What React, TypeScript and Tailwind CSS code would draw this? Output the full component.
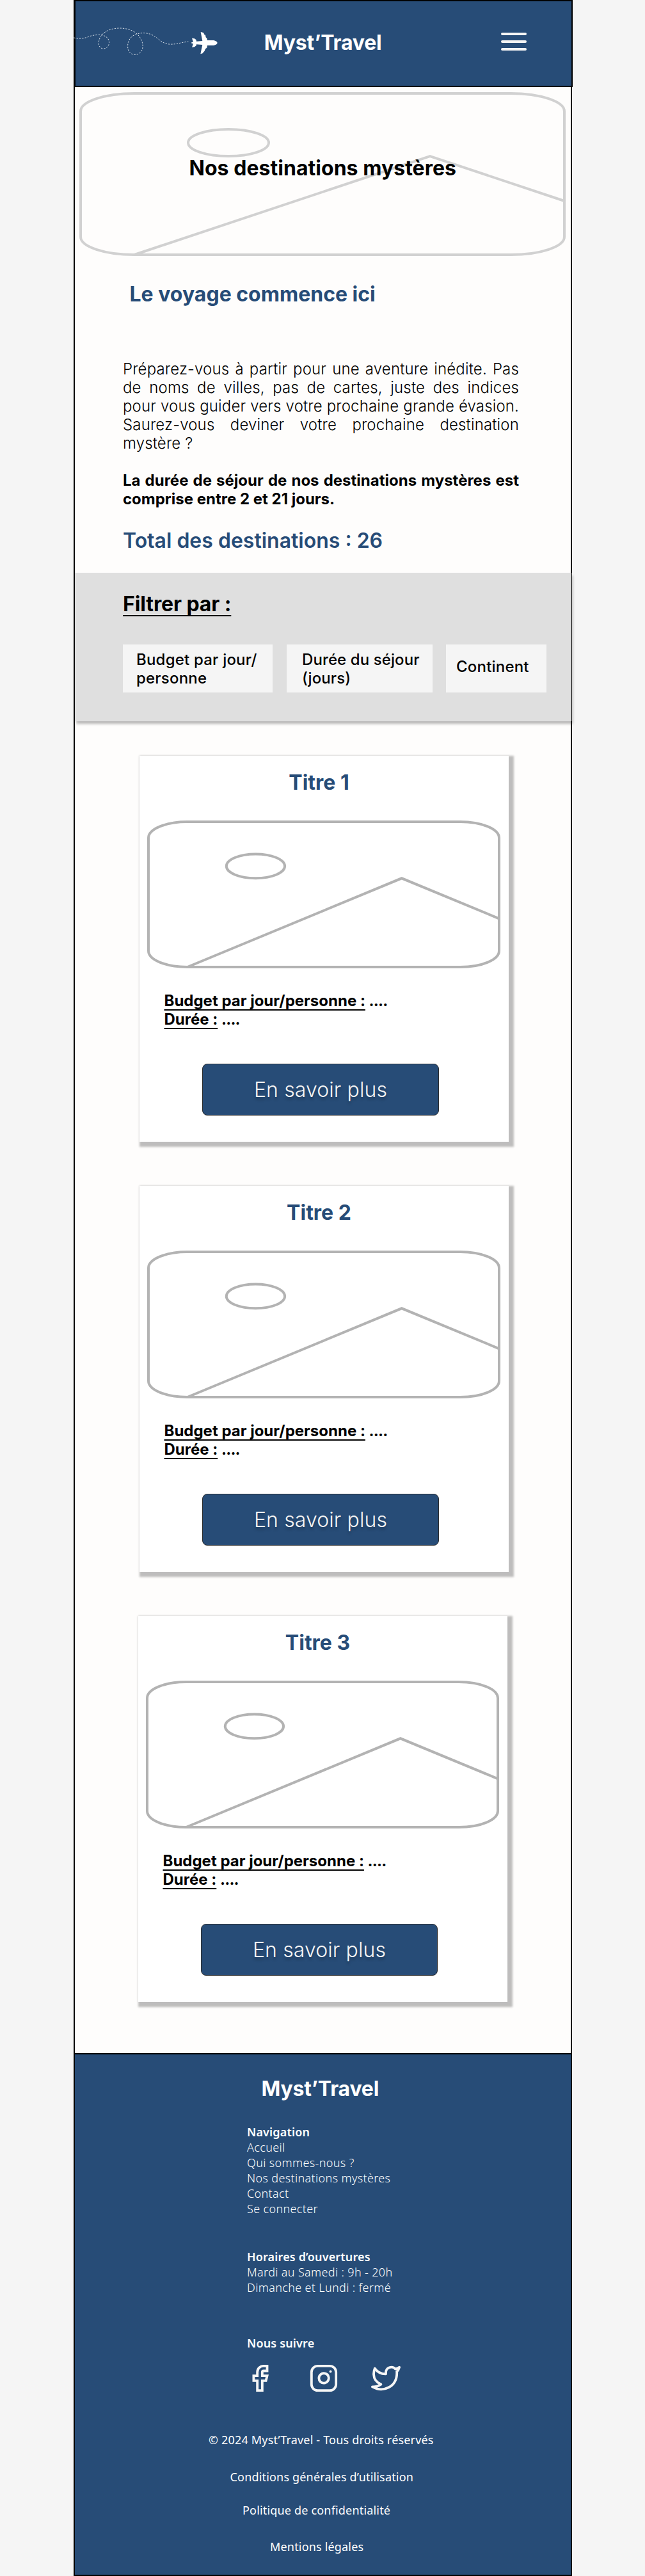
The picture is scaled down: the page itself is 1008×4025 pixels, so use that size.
import type { ReactNode } from "react";

function FlightTrail() {
  return (
    <svg
      className="mt-[41px] h-[43.33px] w-[223.33px] shrink-0 overflow-visible"
      viewBox="54 130 670 130"
      fill="none"
    >
      <path
        d="M46 178 C70 184 95 182 115 173 C135 165 160 163 178 165 C205 172 216 190 210 210 C205 225 190 232 178 228 C160 222 158 195 172 172 C190 145 225 133 262 133 C300 133 340 148 357 178 C374 205 375 235 352 252 C335 262 312 257 303 240 C293 215 300 180 330 165 C355 153 385 153 410 163 C440 177 455 200 480 206 C515 214 545 200 583 196"
        stroke="#dfe5ec"
        strokeWidth="2.8"
        strokeDasharray="7 6"
      />
      <path
        d="M719 202 C719 196 708 190 696 190 L672 190 L670 180 L665 176 L663 165 L657 162 L655 155 L650 153 L641 151 L649 193 L621 195 L620 188 L612 182 L600 180 L606 198 L598 199 L598 204 L606 206 L600 223 L612 221 L620 215 L621 209 L649 211 L640 254 L650 251 L656 243 L659 240 L663 230 L670 225 L672 214 L696 214 C708 214 719 208 719 202Z"
        fill="#fff"
      />
    </svg>
  );
}

function Placeholder({ className }: { className: string }) {
  return (
    <svg
      className={className}
      viewBox="3 3 18 18"
      preserveAspectRatio="none"
      fill="none"
      strokeWidth="4"
      strokeLinecap="round"
      strokeLinejoin="round"
    >
      <rect x="3" y="3" width="18" height="18" rx="2" vectorEffect="non-scaling-stroke" />
      <circle cx="8.5" cy="8.5" r="1.5" vectorEffect="non-scaling-stroke" />
      <path d="M21 15 L16 10 L5 21" vectorEffect="non-scaling-stroke" strokeLinejoin="miter" />
    </svg>
  );
}

function Social({ children }: { children: ReactNode }) {
  return (
    <svg
      className="size-[46px]"
      viewBox="0 0 24 24"
      fill="none"
      stroke="#f5f5f5"
      strokeWidth="2"
      strokeLinecap="round"
      strokeLinejoin="round"
    >
      {children}
    </svg>
  );
}

function Detail({ label }: { label: string }) {
  return (
    <p>
      <span className="underline decoration-2 underline-offset-[5px] [text-decoration-skip-ink:none]">{label}</span>{" "}
      <span className="tracking-[-0.8px]">....</span>
    </p>
  );
}

function Card({ title, className }: { title: string; className: string }) {
  return (
    <article
      className={`h-[603px] w-[577px] bg-white pt-[22px] shadow-[4px_4px_3px_4px_rgba(0,0,0,0.25)] ${className}`}
    >
      <h3 className="w-[561px] text-center text-[32px] leading-[40px] font-bold text-[#274c77]">{title}</h3>
      <Placeholder className="mt-[41px] ml-[14px] h-[227px] w-[548px] overflow-visible stroke-[#b3b3b3]" />
      <div className="mt-[38px] ml-[38.5px] text-[24px] leading-[29px] font-bold whitespace-nowrap">
        <Detail label="Budget par jour/personne :" />
        <Detail label="Durée :" />
      </div>
      <button className="mt-[55px] ml-[98px] flex h-[81px] w-[370px] items-center justify-center rounded-lg border border-[#2c2c2c] bg-[#274c77] text-[32px] leading-[40px] font-light tracking-[0.1px] text-[#f5f5f5] [text-shadow:0_4px_4px_rgba(0,0,0,0.25)]">
        En savoir plus
      </button>
    </article>
  );
}

const intro = [
  "Préparez-vous à partir pour une aventure inédite. Pas",
  "de noms de villes, pas de cartes, juste des indices",
  "pour vous guider vers votre prochaine grande évasion.",
  "Saurez-vous deviner votre prochaine destination",
];

export default function App() {
  return (
    <div className="h-[4025px] w-full overflow-hidden bg-[#f5f5f5] pl-[115px] font-['Inter',sans-serif] text-black">
      <header className="flex h-[136px] w-[780px] border-2 border-l-[3px] border-black bg-[#274c77]">
        <FlightTrail />
        <span className="mt-[45px] ml-[71.5px] w-[189px] text-[32px] leading-[40px] font-bold tracking-[-0.2px] whitespace-nowrap text-white">
          Myst’Travel
        </span>
        <div className="mt-[49px] ml-[181px] flex w-[40px] flex-col gap-2">
          <span className="h-1 rounded-[2px] bg-[#f5f5f5]" />
          <span className="h-1 rounded-[2px] bg-[#f5f5f5]" />
          <span className="h-1 rounded-[2px] bg-[#f5f5f5]" />
        </div>
      </header>

      <main className="flex h-[3072px] w-[779px] flex-col border-x-2 border-black bg-[#fefdfc]">
        <section className="relative mt-[10px] ml-[9px] h-[252px] w-[756px]">
          <Placeholder className="h-full w-full overflow-visible stroke-[#d1d1d1]" />
          <h1 className="absolute top-[97px] left-[169.5px] text-[32px] leading-[40px] font-bold tracking-[0.04px] whitespace-nowrap">
            Nos destinations mystères
          </h1>
        </section>

        <h2 className="mt-[42px] ml-[85.5px] text-[32px] leading-[40px] font-bold text-[#274c77]">
          Le voyage commence ici
        </h2>
        <div className="mt-[82px] ml-[75px] w-[619px] text-[24px] leading-[29px]">
          <p className="font-light tracking-[0.15px]">
            {intro.map((line) => (
              <span key={line} className="block whitespace-nowrap [text-align-last:justify]">
                {line}
              </span>
            ))}
            mystère ?
          </p>
          <p className="mt-[29px] text-justify font-bold">
            La durée de séjour de nos destinations mystères est comprise entre 2 et 21 jours.
          </p>
        </div>
        <p className="mt-[31px] ml-[75px] text-[32px] leading-[40px] font-semibold text-[#274c77]">
          Total des destinations : 26
        </p>

        <section className="relative mt-[30px] h-[232px] w-[776px] shrink-0 bg-[#dfdfdf] pt-[29px] pl-[75px] shadow-[2px_4px_4px_rgba(0,0,0,0.28)]">
          <h2 className="w-fit text-[32px] leading-[40px] font-bold tracking-[-0.1px] underline decoration-2 underline-offset-[6px] [text-decoration-skip-ink:none]">
            Filtrer par :
          </h2>
          <div className="mt-[43px] flex h-[75px] text-[24px] leading-[29px] font-medium whitespace-nowrap">
            <div className="w-[234px] bg-[#f5f5f5] pt-[9px] pl-[21px] tracking-[0.2px]">
              Budget par jour/
              <br />
              personne
            </div>
            <div className="ml-[22px] w-[228px] bg-[#f5f5f5] pt-[9px] pl-[24px] tracking-[0.1px]">
              Durée du séjour
              <br />
              (jours)
            </div>
            <div className="ml-[21px] w-[157px] bg-[#f5f5f5] pt-[20px] pl-[16px] tracking-[0.2px]">Continent</div>
          </div>
        </section>

        <section className="flex flex-col gap-[69px] pt-[54px]">
          <Card title="Titre 1" className="ml-[101px]" />
          <Card title="Titre 2" className="ml-[101px]" />
          <Card title="Titre 3" className="ml-[99px]" />
        </section>
      </main>

      <footer className="flex h-[817px] w-[779px] flex-col border-2 border-black bg-[#274c77] pt-[34px] font-['Noto_Sans',sans-serif] text-[18px] leading-[24px] text-white">
        <span className="ml-[291.5px] font-['Inter',sans-serif] text-[32px] leading-[40px] font-bold tracking-[-0.2px]">
          Myst’Travel
        </span>
        <nav className="mt-[35px] ml-[269px] flex flex-col font-light tracking-[0.35px]">
          <b className="font-semibold tracking-[0.15px]">Navigation</b>
          <a>Accueil</a>
          <a>Qui sommes-nous ?</a>
          <a>Nos destinations mystères</a>
          <a>Contact</a>
          <a>Se connecter</a>
        </nav>
        <div className="mt-[51px] ml-[269px] flex flex-col font-light tracking-[0.35px]">
          <b className="font-semibold tracking-[0.15px]">Horaires d’ouvertures</b>
          <span>Mardi au Samedi : 9h - 20h</span>
          <span>Dimanche et Lundi : fermé</span>
        </div>
        <b className="mt-[63px] ml-[269px] font-semibold tracking-[0.15px]">Nous suivre</b>
        <div className="mt-[20px] ml-[266px] flex">
          <Social>
            <path strokeLinejoin="miter" d="M18 2h-3a5 5 0 0 0-5 5v3H7v4h3v8h4v-8h3l1-4h-4V7a1 1 0 0 1 1-1h3z" />
          </Social>
          <div className="ml-[53.5px]">
            <Social>
              <rect x="2" y="2" width="20" height="20" rx="5" />
              <path d="M16 11.37A4 4 0 1 1 12.63 8 4 4 0 0 1 16 11.37z" />
              <path d="M17.5 6.5h.01" />
            </Social>
          </div>
          <div className="ml-[51.5px]">
            <Social>
              <path d="M23 3a10.9 10.9 0 0 1-3.14 1.53 4.48 4.48 0 0 0-7.86 3v1A10.66 10.66 0 0 1 3 4s-4 9 5 13a11.64 11.64 0 0 1-7 2c9 5 20 0 20-11.5a4.5 4.5 0 0 0-.08-.83A7.72 7.72 0 0 0 23 3z" />
            </Social>
          </div>
        </div>
        <div className="mt-[61px] flex flex-col tracking-[0.18px] whitespace-nowrap">
          <span className="ml-[209px]">© 2024 Myst’Travel - Tous droits réservés</span>
          <a className="mt-[34px] ml-[242.5px]">Conditions générales d’utilisation</a>
          <a className="mt-[28px] ml-[262px]">Politique de confidentialité</a>
          <a className="mt-[33px] ml-[305px]">Mentions légales</a>
        </div>
      </footer>
    </div>
  );
}
